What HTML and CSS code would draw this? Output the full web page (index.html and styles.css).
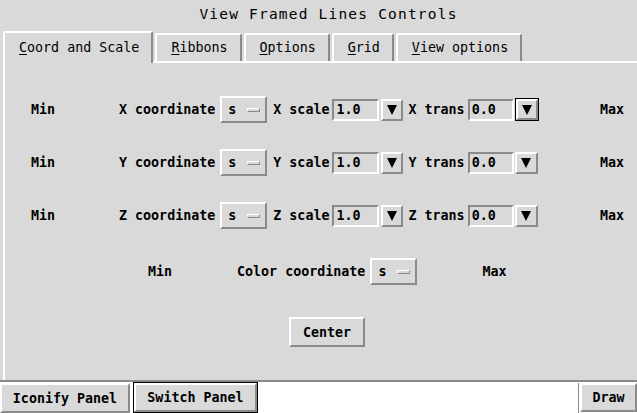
FILE: index.html
```html
<!DOCTYPE html>
<html>
<head>
<meta charset="utf-8">
<link rel="stylesheet" href="styles.css">
</head>
<body>
<div class="win">
  <div class="title">View Framed Lines Controls</div>
  <div class="tabs">
    <div class="tab sel"><u>C</u>oord and Scale</div>
    <div class="tab"><u>R</u>ibbons</div>
    <div class="tab"><u>O</u>ptions</div>
    <div class="tab"><u>G</u>rid</div>
    <div class="tab"><u>V</u>iew options</div>
  </div>
  <div class="panel">
    <div class="row first">
      <span class="min">Min</span>
      <span>X coordinate</span>
      <div class="mb"><span>s</span><span class="ind"></span></div>
      <span class="scl">X scale</span>
      <div class="entry">1.0</div>
      <div class="arrow"></div>
      <span class="trn">X trans</span>
      <div class="entry e2">0.0</div>
      <div class="focus"><div class="arrow"></div></div>
      <span class="max">Max</span>
    </div>
    <div class="row">
      <span class="min">Min</span>
      <span>Y coordinate</span>
      <div class="mb"><span>s</span><span class="ind"></span></div>
      <span class="scl">Y scale</span>
      <div class="entry">1.0</div>
      <div class="arrow"></div>
      <span class="trn">Y trans</span>
      <div class="entry e2">0.0</div>
      <div class="arrow a2"></div>
      <span class="max">Max</span>
    </div>
    <div class="row">
      <span class="min">Min</span>
      <span>Z coordinate</span>
      <div class="mb"><span>s</span><span class="ind"></span></div>
      <span class="scl">Z scale</span>
      <div class="entry">1.0</div>
      <div class="arrow"></div>
      <span class="trn">Z trans</span>
      <div class="entry e2">0.0</div>
      <div class="arrow a2"></div>
      <span class="max">Max</span>
    </div>
    <div class="row crow">
      <span class="min cmin">Min</span>
      <span>Color coordinate</span>
      <div class="mb"><span>s</span><span class="ind"></span></div>
      <span class="cmax">Max</span>
    </div>
    <div class="center-row">
      <div class="btn center">Center</div>
    </div>
  </div>
  <div class="bottom">
    <div class="btn iconify">Iconify Panel</div>
    <div class="sw"><div class="btn switch">Switch Panel</div></div>
    <div class="drawwrap"><div class="btn draw">Draw</div></div>
  </div>
</div>
</body>
</html>
```
FILE: styles.css
```css
* { box-sizing: border-box; }
body {
  margin: 0;
  width: 637px;
  height: 413px;
  overflow: hidden;
  background: #d9d9d9;
  color: #000;
  font-family: "DejaVu Sans Mono", "Liberation Mono", monospace;
  font-size: 13.33px;
}
.win { display: flex; flex-direction: column; height: 413px; }
.title {
  height: 27px;
  line-height: 28px;
  text-align: center;
  font-size: 14.5px;
  letter-spacing: 1.2px;
  padding-left: 20px;
}
.tabs {
  height: 34px;
  display: flex;
  align-items: flex-end;
  padding-left: 3px;
}
.tab {
  height: 28px;
  border-style: solid;
  border-width: 2px 2px 0 2px;
  border-color: #fff #8a8a8a transparent #fff;
  border-radius: 2px 2px 0 0;
  padding: 0 12px 0 14px;
  margin-right: 2px;
  line-height: 26px;
  white-space: nowrap;
}
.tab.sel {
  height: 32px;
  margin-bottom: -2px;
  position: relative;
  z-index: 1;
  background: #d9d9d9;
  line-height: 30px;
}
.tab u { text-underline-offset: 2px; }
.panel {
  flex: 1;
  margin-left: 3px;
  border-top: 2px solid #fff;
  border-left: 2px solid #fff;
  padding-top: 33px;
  display: flex;
  flex-direction: column;
  font-weight: bold;
}
.row {
  display: flex;
  align-items: center;
  height: 27px;
  padding-left: 26px;
  padding-right: 13px;
  margin-bottom: 26px;
  white-space: nowrap;
}
.min { width: 88px; }
.mb {
  width: 47px;
  height: 27px;
  border: 2px solid;
  border-color: #fff #8a8a8a #8a8a8a #fff;
  display: flex;
  align-items: center;
  padding-left: 6px;
  margin-left: 5px;
  font-weight: bold;
}
.ind {
  width: 13px;
  height: 4px;
  border: 1px solid;
  border-color: #fff #8a8a8a #8a8a8a #fff;
  margin-left: 11px;
}
.scl { margin-left: 6px; }
.entry {
  width: 47px;
  height: 22px;
  border: 2px solid;
  border-color: #8a8a8a #fff #fff #8a8a8a;
  padding-left: 2px;
  margin-left: 3px;
  line-height: 18px;
}
.entry.e2 { width: 46px; }
.arrow {
  width: 22px;
  height: 22px;
  border: 2px solid;
  border-color: #fff #8a8a8a #8a8a8a #fff;
  margin-left: 2px;
  display: flex;
  align-items: center;
  justify-content: center;
}
.arrow::after {
  content: "";
  width: 0;
  height: 0;
  border-left: 5.5px solid transparent;
  border-right: 5.5px solid transparent;
  border-top: 10px solid #000;
}
.arrow.a2 { margin-left: 1px; width: 23px; }
.focus {
  width: 24px;
  height: 23px;
  border: 1px solid #000;
  margin-left: 1px;
}
.focus .arrow { margin: 0; width: 22px; height: 21px; }
.trn { margin-left: 5px; }
.max { margin-left: auto; }
.crow { padding-left: 143px; margin-top: 3px; margin-bottom: 0; }
.cmin { width: 89px; }
.cmax { margin-left: 65px; }
.center-row { padding-left: 284px; margin-top: 32px; }
.btn {
  background: #d9d9d9;
  border: 2px solid;
  border-color: #fff #8a8a8a #8a8a8a #fff;
  font-weight: bold;
  display: flex;
  align-items: center;
  justify-content: center;
  white-space: nowrap;
}
.center { width: 76px; height: 30px; }
.bottom {
  height: 33px;
  border-top: 2px solid #8a8a8a;
  background: #fff;
  display: flex;
  padding-top: 1px;
}
.iconify { width: 130px; height: 30px; }
.sw {
  width: 125px;
  height: 31px;
  margin-left: 3px;
  margin-top: -1px;
  border: 1px solid #000;
}
.switch { width: 123px; height: 29px; }
.drawwrap {
  margin-left: auto;
  border-left: 1px solid #8a8a8a;
  padding-left: 1px;
  width: 59px;
}
.draw { width: 57px; height: 29px; }
```
